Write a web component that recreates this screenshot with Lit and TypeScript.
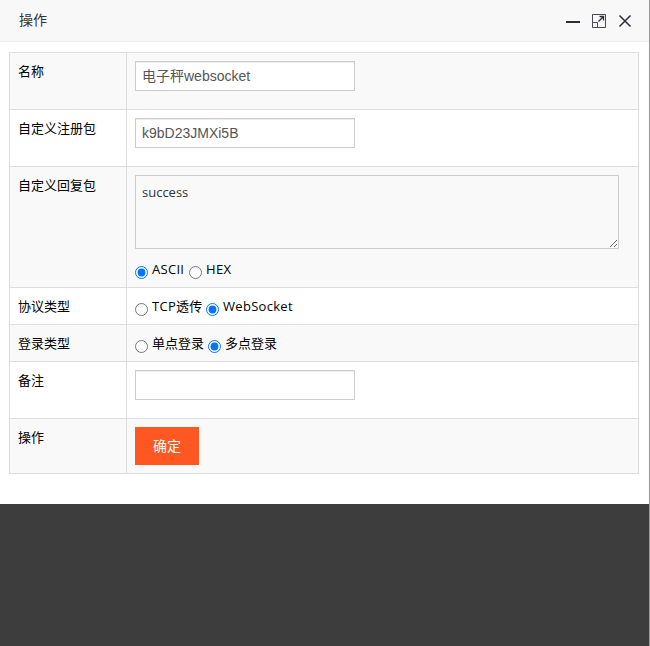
import { LitElement, html, css, svg } from "lit";
import { customElement, property } from "lit/decorators.js";

interface Choice {
  text: string;
  checked?: boolean;
  width: number;
}

@customElement("radio-group")
class RadioGroup extends LitElement {
  @property() name = "";
  @property({ attribute: false }) choices: Choice[] = [];

  static styles = css`
    :host { display: flex; height: 20px; }
    label { display: flex; flex: none; white-space: nowrap; line-height: 20px; }
    input { flex: none; width: 13px; height: 13px; margin: 7px 4px 0 0; }
    .latin { letter-spacing: 0.3px; }
  `;

  render() {
    return this.choices.map(
      (c) => html`<label style="width:${c.width}px"
        ><input type="radio" name=${this.name} .checked=${!!c.checked} /><span
          class=${/^[A-Za-z]/.test(c.text) ? "latin" : ""}
          >${c.text}</span
        ></label
      >`
    );
  }
}

@customElement("app-root")
class AppRoot extends LitElement {
  static styles = css`
    :host {
      display: block;
      height: 646px;
      box-sizing: border-box;
      overflow: hidden;
      background: #3d3d3d;
      border-right: 1px solid #999;
      color: #000;
      font: 13px/20px "Open Sans", "Noto Sans CJK SC", sans-serif;
    }
    * { box-sizing: border-box; }
    .dialog { height: 504px; background: #fff; }
    .title {
      display: flex;
      align-items: center;
      height: 42px;
      padding: 0 17px 0 19px;
      background: #f8f8f8;
      border-bottom: 1px solid #eee;
      color: #333;
      font: 14px "Liberation Sans", "Noto Sans CJK SC", sans-serif;
    }
    .title span { flex: 1; padding-bottom: 3px; }
    .tools { display: block; width: 66px; height: 16px; }
    .form { margin: 10px 10px 0 9px; border: 1px solid #ddd; border-bottom: 0; }
    .row { display: grid; grid-template-columns: 117px 1fr; border-bottom: 1px solid #ddd; }
    .row:nth-child(odd) { background: #f9f9f9; }
    .name { padding: 8px; border-right: 1px solid #ddd; }
    .value { padding: 8px; }
    .input-row { height: 57px; }
    .reply-row { height: 121px; }
    .radio-row { height: 37px; }
    .button-row { height: 55px; }
    .text {
      display: block;
      width: 220px;
      height: 30px;
      margin: 0;
      padding: 4px 6px;
      border: 1px solid #ccc;
      border-radius: 0;
      background: #fff;
      box-shadow: inset 0 1px 1px rgba(0, 0, 0, 0.075);
      color: #555;
      font: 14px/20px "Liberation Sans", "Noto Sans CJK SC", sans-serif;
    }
    .text.cjk { padding: 3px 6px 5px; }
    textarea {
      display: block;
      width: 484px;
      height: 74px;
      margin: 0 0 10px;
      padding: 6px;
      border: 1px solid #ccc;
      background: #f9f9f9;
      color: #333;
      font: 13px/20px "Open Sans", "Noto Sans CJK SC", sans-serif;
    }
    button {
      display: block;
      width: 64px;
      height: 38px;
      padding: 0 0 2px;
      border: 0;
      background: #ff5722;
      color: #fff;
      font: 14px "Liberation Sans", "Noto Sans CJK SC", sans-serif;
    }
  `;

  private tools() {
    return svg`<svg class="tools" viewBox="0 0 66 16" fill="none">
      <path d="M0 9H14" stroke="#2d2c3b" stroke-width="2"/>
      <path d="M26.5 9.5V1.5H39.5V14.5H31.5M26.5 9.5H31.5V14.5H26.5Z" stroke="#2d2c3b" stroke-opacity=".85"/>
      <path d="M32.5 8.5L37.5 3.5M33.5 3.5H37.5V7.5" stroke="#2d2c3b" stroke-width="1.3"/>
      <path d="M53.5 2.5L64.5 13.5M64.5 2.5L53.5 13.5" stroke="#2d2c3b" stroke-width="1.5"/>
    </svg>`;
  }

  render() {
    return html`
      <div class="dialog">
        <div class="title"><span>操作</span>${this.tools()}</div>
        <div class="form">
          <div class="row input-row">
            <div class="name">名称</div>
            <div class="value"><input class="text cjk" .value=${"电子秤websocket"} /></div>
          </div>
          <div class="row input-row">
            <div class="name">自定义注册包</div>
            <div class="value"><input class="text" .value=${"k9bD23JMXi5B"} /></div>
          </div>
          <div class="row reply-row">
            <div class="name">自定义回复包</div>
            <div class="value">
              <textarea .value=${"success"} spellcheck="false"></textarea>
              <radio-group
                name="format"
                .choices=${[{ text: "ASCII", checked: true, width: 54 }, { text: "HEX", width: 50 }]}
              ></radio-group>
            </div>
          </div>
          <div class="row radio-row">
            <div class="name">协议类型</div>
            <div class="value">
              <radio-group
                name="protocol"
                .choices=${[{ text: "TCP透传", width: 71 }, { text: "WebSocket", checked: true, width: 100 }]}
              ></radio-group>
            </div>
          </div>
          <div class="row radio-row">
            <div class="name">登录类型</div>
            <div class="value">
              <radio-group
                name="login"
                .choices=${[{ text: "单点登录", width: 73 }, { text: "多点登录", checked: true, width: 80 }]}
              ></radio-group>
            </div>
          </div>
          <div class="row input-row">
            <div class="name">备注</div>
            <div class="value"><input class="text" /></div>
          </div>
          <div class="row button-row">
            <div class="name">操作</div>
            <div class="value"><button>确定</button></div>
          </div>
        </div>
      </div>
    `;
  }
}
